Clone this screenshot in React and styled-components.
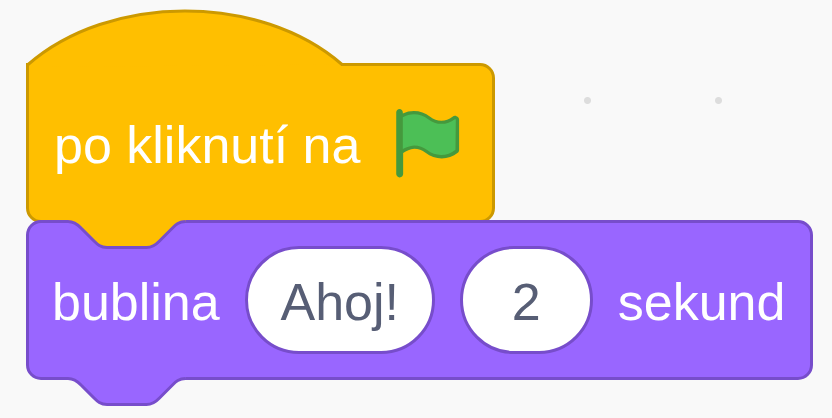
import React from "react";
import styled, { createGlobalStyle } from "styled-components";

const events = { fill: "#ffbf00", stroke: "#cc9900" };
const looks = { fill: "#9966ff", stroke: "#774dcb" };

const GlobalStyle = createGlobalStyle`
  * {
    box-sizing: border-box;
  }
  body {
    margin: 0;
    background: #f9f9f9;
  }
`;

const Workspace = styled.main`
  min-height: 100vh;
  padding: 9px 18px 0 26px;
  overflow: hidden;
  background-color: #f9f9f9;
  background-image: radial-gradient(circle, #dddddd 3px, transparent 4px);
  background-size: 131px 131px;
  background-position: 129px 35px;
  font-family: "Liberation Sans", Arial, sans-serif;
  font-size: 52px;
  line-height: 60px;
`;

const Script = styled.div`
  display: flex;
  flex-direction: column;
  align-items: flex-start;
`;

const Block = styled.div`
  position: relative;
  display: flex;
  align-items: center;
  min-height: 160px;
  padding: ${(p) => (p.$hat ? "0 25px" : "0 25px 0 23px")};
  gap: ${(p) => (p.$hat ? 28 : 25)}px;
  white-space: nowrap;
  color: #ffffff;
  background: ${(p) => p.$palette.fill};
  border: 3px solid ${(p) => p.$palette.stroke};
  border-radius: ${(p) => (p.$hat ? "0 15px 15px 15px" : "15px")};
`;

const StackedBlock = styled(Block)`
  margin-top: -3px;
`;

const Label = styled.span`
  padding-top: 3px;
`;

const Field = styled.input`
  width: ${(p) => p.$width}px;
  height: 108px;
  padding: 3px 0 0;
  font: inherit;
  text-align: center;
  color: #575e75;
  background: #ffffff;
  border: 3px solid ${looks.stroke};
  border-radius: 54px;
  outline: none;
`;

const CapArt = styled.svg`
  display: block;
  position: relative;
  z-index: 1;
  margin-bottom: -4px;
`;

const NotchArt = styled.svg`
  position: absolute;
  left: 37px;
  top: ${(p) => (p.$edge === "top" ? "-3px" : "100%")};
`;

const FlagArt = styled.svg`
  display: block;
`;

function HatCap({ palette }) {
  return (
    <CapArt width="320" height="58" viewBox="0 0 320 58" aria-hidden="true">
      <path d="M3 54H315V58H3Z" fill={palette.fill} />
      <path
        d="M1.5 58V56C83.500 -16 234 -16 316 55.500H320"
        fill={palette.fill}
        stroke={palette.stroke}
        strokeWidth="3"
      />
    </CapArt>
  );
}

function Notch({ edge, fill, stroke }) {
  return (
    <NotchArt $edge={edge} width="122" height="30" viewBox="0 0 122 30" aria-hidden="true">
      <path
        d="M2 0V1.500c6.500 0 10 3.300 13 6.500l13 13c3.300 3.300 6.500 6.500 13 6.500h39.500c6.500 0 10-3.300 13-6.500l13-13c3.300-3.300 6.500-6.500 13-6.500V0Z"
        fill={fill}
      />
      <path
        d="M2 1.500c6.500 0 10 3.300 13 6.500l13 13c3.300 3.300 6.500 6.500 13 6.500h39.500c6.500 0 10-3.300 13-6.500l13-13c3.300-3.300 6.500-6.500 13-6.500"
        fill="none"
        stroke={stroke}
        strokeWidth="3"
      />
    </NotchArt>
  );
}

function GreenFlag() {
  return (
    <FlagArt width="79" height="79" viewBox="0 0 24 24" role="img" aria-label="zelená vlajka">
      <path
        d="M20.8 3.700c-.4-.2-.9-.1-1.200.2-2 1.600-4.800 1.600-6.800 0-2.300-1.900-5.600-2.300-8.300-1v-.4c0-.6-.5-1-1-1s-1 .4-1 1v18.800c0 .5.5 1 1 1h.1c.5 0 1-.4 1-1v-6.400c1-.7 2.100-1.200 3.400-1.300 1.200 0 2.400.4 3.400 1.200 2.900 2.300 7 2.300 9.800 0 .3-.2.4-.5.4-.9V4.700c0-.5-.3-.9-.8-1z"
        fill="#45993d"
      />
      <path
        d="M20.500 13.900C18 16 14.400 16 11.900 14c-1.100-.9-2.500-1.400-4-1.400-1.200.1-2.300.5-3.400 1.100V4c2.500-1.400 5.500-1.100 7.700.6 2.400 1.900 5.700 1.900 8.100 0h.2l.1.1z"
        fill="#4cbf56"
      />
    </FlagArt>
  );
}

export default function App() {
  return (
    <Workspace>
      <GlobalStyle />
      <Script>
        <HatCap palette={events} />
        <Block $palette={events} $hat>
          <Label>po kliknutí na</Label>
          <GreenFlag />
        </Block>
        <StackedBlock $palette={looks}>
          <Notch edge="top" fill={events.fill} stroke={looks.stroke} />
          <Label>bublina</Label>
          <Field $width={190} aria-label="Text bubliny" defaultValue="Ahoj!" />
          <Field $width={133} aria-label="Počet sekund" inputMode="numeric" defaultValue="2" />
          <Label>sekund</Label>
          <Notch edge="bottom" fill={looks.fill} stroke={looks.stroke} />
        </StackedBlock>
      </Script>
    </Workspace>
  );
}
